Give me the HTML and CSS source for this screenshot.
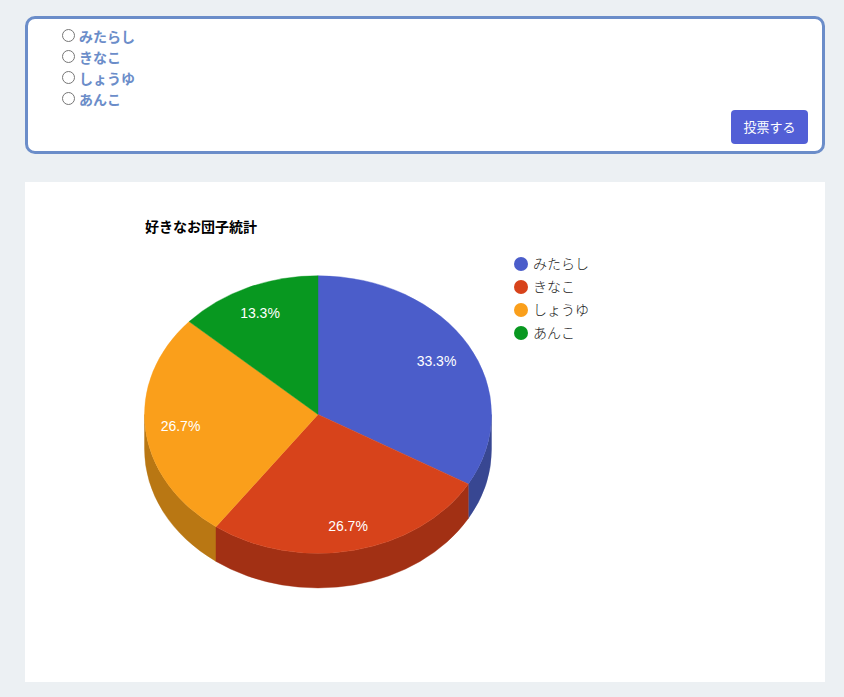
FILE: index.html
```html
<!DOCTYPE html>
<html lang="ja">
<head>
<meta charset="utf-8">
<title>お団子アンケート</title>
<link rel="stylesheet" href="styles.css">
</head>
<body>
<form class="poll">
  <div class="options">
    <label class="option"><input type="radio" name="dango"><span>みたらし</span></label>
    <label class="option"><input type="radio" name="dango"><span>きなこ</span></label>
    <label class="option"><input type="radio" name="dango"><span>しょうゆ</span></label>
    <label class="option"><input type="radio" name="dango"><span>あんこ</span></label>
  </div>
  <button class="vote" type="button">投票する</button>
</form>
<section class="stats">
  <svg class="chart" width="800" height="500" viewBox="25 182 800 500">
    <text class="title" x="145" y="232" textLength="112">好きなお団子統計</text>
    <g class="sides">
      <path fill="#384792" stroke="#384792" d="M491.500 414.500A173.500 138.800 0 0 1 468.300 483.900V518.500A173.500 138.800 0 0 0 491.500 449.100Z"/>
      <path fill="#b97713" stroke="#b97713" d="M216 526.800A173.500 138.800 0 0 1 144.500 414.500V449.100A173.500 138.800 0 0 0 216 561.400Z"/>
      <path fill="#a23014" stroke="#a23014" d="M468.300 483.900A173.500 138.800 0 0 1 216 526.800V561.400A173.500 138.800 0 0 0 468.300 518.500Z"/>
    </g>
    <g class="slices">
      <path fill="#4b5dca" stroke="#4b5dca" d="M318 414.500V275.700A173.500 138.800 0 0 1 468.300 483.900Z"/>
      <path fill="#d7431b" stroke="#d7431b" d="M318 414.500L468.300 483.900A173.500 138.800 0 0 1 216 526.800Z"/>
      <path fill="#fa9f1b" stroke="#fa9f1b" d="M318 414.500L216 526.800A173.500 138.800 0 0 1 189.100 321.600Z"/>
      <path fill="#089820" stroke="#089820" d="M318 414.500L189.100 321.600A173.500 138.800 0 0 1 318 275.700Z"/>
    </g>
    <g class="percent">
      <text x="436.500" y="366">33.3%</text>
      <text x="348" y="531">26.7%</text>
      <text x="180.500" y="431">26.7%</text>
      <text x="260" y="318">13.3%</text>
    </g>
    <g class="legend">
      <circle cx="521" cy="264" r="7" fill="#4b5dca"/><text x="533" y="269">みたらし</text>
      <circle cx="521" cy="287" r="7" fill="#d7431b"/><text x="533" y="292">きなこ</text>
      <circle cx="521" cy="310" r="7" fill="#fa9f1b"/><text x="533" y="315">しょうゆ</text>
      <circle cx="521" cy="333" r="7" fill="#089820"/><text x="533" y="338">あんこ</text>
    </g>
  </svg>
</section>
</body>
</html>
```
FILE: styles.css
```css
* { box-sizing: border-box; }
body {
  margin: 0;
  padding: 16px 19px 15px 25px;
  background: #ecf0f3;
  font-family: "Liberation Sans", "Noto Sans CJK JP", sans-serif;
}
.poll {
  display: flex;
  flex-direction: column;
  height: 138px;
  padding: 7px 14px 7px 34px;
  border: 3px solid #6b8dc9;
  border-radius: 10px;
  background: #fff;
}
.options { display: flex; flex-direction: column; }
.option {
  display: flex;
  height: 21px;
  color: #6b8dc9;
  font-size: 14px;
  font-weight: 700;
  line-height: 23px;
}
.option input { width: 13px; height: 13px; margin: 3px 4px 0 0; }
.vote {
  align-self: flex-end;
  width: 77px;
  height: 34px;
  padding: 0 0 2px;
  border: 0;
  border-radius: 4px;
  background: #525fd6;
  color: #fff;
  font: 13px "Liberation Sans", "Noto Sans CJK JP", sans-serif;
}
.stats { height: 500px; margin-top: 28px; background: #fff; }
.chart { display: block; }
.chart text { font-size: 14px; }
.title { font-weight: 700; }
.sides, .slices { stroke-width: 0.4; }
.percent { fill: #fff; text-anchor: middle; }
.legend { fill: #222; font-weight: 300; }
```
